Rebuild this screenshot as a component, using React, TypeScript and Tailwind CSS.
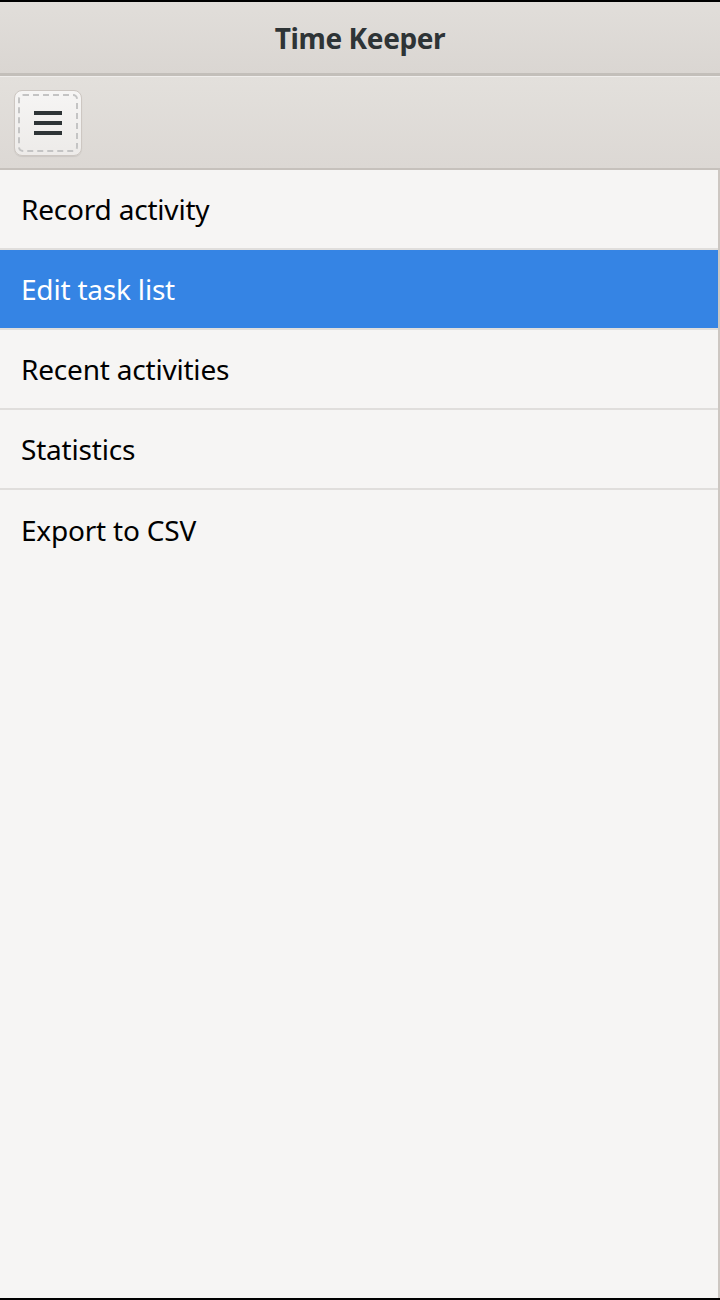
import React, { useState } from 'react';

const items = ['Record activity', 'Edit task list', 'Recent activities', 'Statistics', 'Export to CSV'];

export default function App() {
    const [selected, setSelected] = useState(1);

    return (
        <div
            className="w-[720px] h-[1300px] flex flex-col bg-[#f6f5f4] border-t-2 border-b-2 border-black overflow-hidden"
            style={{ fontFamily: '"Noto Sans", "Open Sans", sans-serif' }}
        >
            {/* Title bar */}
            <div className="h-[74px] shrink-0 flex items-center justify-center bg-gradient-to-b from-[#e1deda] to-[#dad6d2] border-b-[3px] border-[#c3bfba]">
                <h1 className="text-[28px] font-bold text-[#2e3436] tracking-[-0.4px]">Time Keeper</h1>
            </div>

            {/* Toolbar */}
            <div className="h-[94px] shrink-0 flex items-center pl-[14px] bg-gradient-to-b from-[#e3e0dc] to-[#dcd8d4] border-t border-[#f0eeec] border-b-2 border-b-[#c6c1bc]">
                <button className="w-[68px] h-[66px] rounded-[8px] border border-[#cdc7c2] bg-gradient-to-b from-[#f6f5f4] to-[#edebe9] shadow-[0_1px_1px_rgba(0,0,0,0.08)] p-[3px]">
                    <div className="w-full h-full rounded-[5px] border-2 border-dashed border-[#c4c4c4] flex flex-col items-center justify-center gap-[6px]">
                        <span className="block w-[28px] h-[4px] bg-[#2e3436]" />
                        <span className="block w-[28px] h-[4px] bg-[#2e3436]" />
                        <span className="block w-[28px] h-[4px] bg-[#2e3436]" />
                    </div>
                </button>
            </div>

            {/* List */}
            <div className="flex-1 flex flex-col border-r-2 border-[#cdc7c2]">
                {items.map((label, i) => (
                    <div
                        key={label}
                        onClick={() => setSelected(i)}
                        className={`h-[80px] shrink-0 flex items-center pl-[21px] text-[28px] tracking-[-0.2px] ${
                            i < items.length - 1 ? 'border-b-2 border-[#e0dedc]' : ''
                        } ${i === selected ? 'bg-[#3584e4] text-white' : 'text-[#000000]'}`}
                    >
                        {label}
                    </div>
                ))}
            </div>
        </div>
    );
}
